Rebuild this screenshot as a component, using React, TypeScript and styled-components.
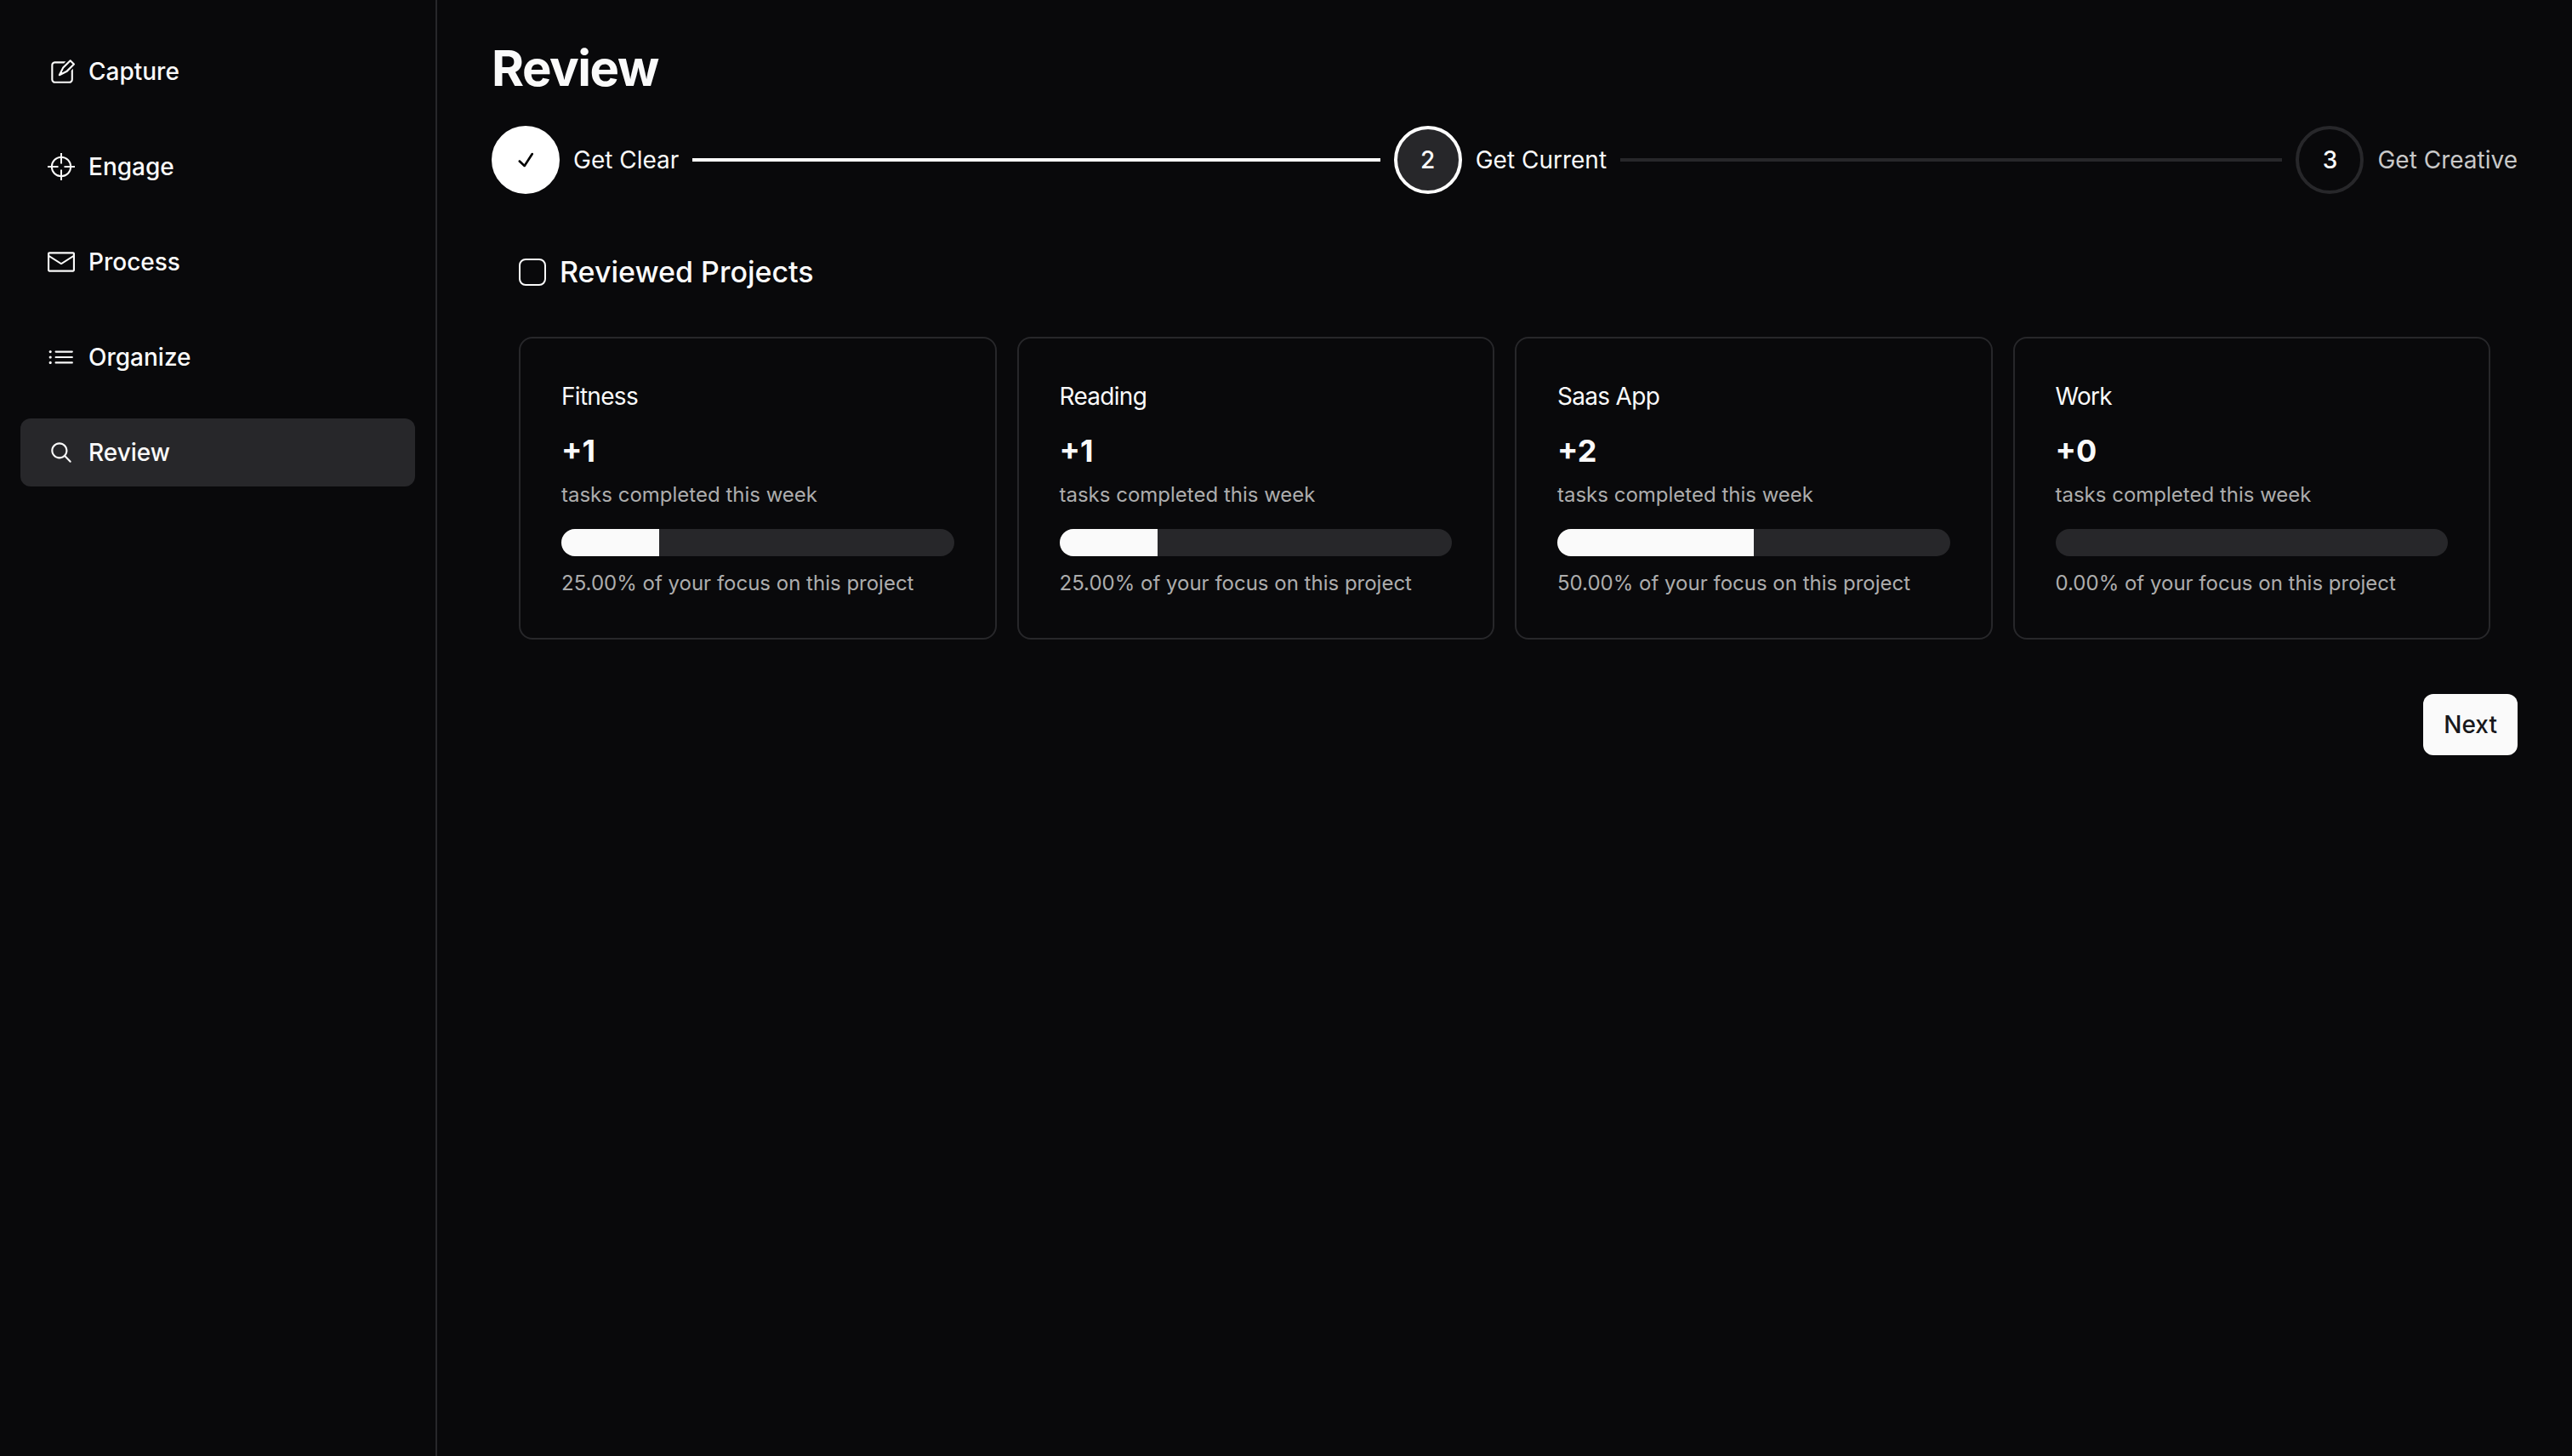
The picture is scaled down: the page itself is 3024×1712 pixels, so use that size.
import React, { useState } from "react";
import {
  RxCheck,
  RxEnvelopeClosed,
  RxListBullet,
  RxMagnifyingGlass,
  RxPencil2,
} from "react-icons/rx";
import styled, { createGlobalStyle, css } from "styled-components";

const color = {
  background: "#09090b",
  foreground: "#fafafa",
  surface: "#27272a",
  muted: "#adadad",
  dim: "#c8c8c8",
  ink: "#18181b",
};

const GlobalStyle = createGlobalStyle`
  *, *::before, *::after { box-sizing: border-box; }
  body {
    margin: 0;
    background: ${color.background};
    color: ${color.foreground};
    font-family: Inter, "Liberation Sans", sans-serif;
    font-size: 28px;
    line-height: 40px;
    -webkit-font-smoothing: antialiased;
  }
  h1, h2, h3, p, ul, ol { margin: 0; padding: 0; }
  ul, ol { list-style: none; }
  button { font: inherit; border: 0; cursor: pointer; }
`;

const Shell = styled.div`
  display: flex;
  min-height: 100vh;
`;

const Sidebar = styled.nav`
  flex: none;
  width: 514px;
  padding: 44px 24px;
  border-right: 2px solid ${color.surface};
`;

const NavList = styled.ul`
  display: flex;
  flex-direction: column;
  gap: 32px;
`;

const NavLink = styled.a<{ $active: boolean }>`
  display: flex;
  align-items: center;
  gap: 16px;
  height: 80px;
  padding: 0 32px;
  border-radius: 12px;
  background: ${(p) => (p.$active ? color.surface : "transparent")};
  color: inherit;
  font-weight: 500;
  text-decoration: none;

  svg {
    width: 32px;
    height: 32px;
  }
`;

const Main = styled.main`
  flex: 1;
  min-width: 0;
  padding: 44px 64px;
`;

const PageTitle = styled.h1`
  margin-bottom: 32px;
  font-size: 58px;
  font-weight: 700;
  line-height: 72px;
  letter-spacing: -0.025em;
`;

const Steps = styled.ol`
  display: flex;
`;

type StepState = "done" | "current" | "upcoming";

const Step = styled.li<{ $state: StepState }>`
  display: flex;
  align-items: center;
  gap: 16px;
  color: ${(p) => (p.$state === "upcoming" ? color.dim : color.foreground)};

  &:not(:last-child) {
    flex: 1;
  }

  &:not(:last-child)::after {
    content: "";
    flex: 1;
    height: 4px;
    margin-right: 16px;
    background: ${(p) => (p.$state === "done" ? "#fff" : color.surface)};
  }
`;

const stepLook = {
  done: css`
    background: #fff;
    border-color: #fff;
    color: #000;
  `,
  current: css`
    background: ${color.surface};
    border-color: #fff;
  `,
  upcoming: css`
    background: transparent;
    border-color: ${color.surface};
  `,
};

const StepCircle = styled.button<{ $state: StepState }>`
  display: flex;
  align-items: center;
  justify-content: center;
  width: 80px;
  height: 80px;
  padding: 0;
  border: 4px solid;
  border-radius: 50%;
  color: ${color.foreground};
  font-weight: 500;
  ${(p) => stepLook[p.$state]}

  svg {
    width: 32px;
    height: 32px;
  }
`;

const Section = styled.section`
  padding: 64px 32px;
`;

const CheckLabel = styled.label`
  display: flex;
  align-items: center;
  gap: 16px;
  margin-bottom: 48px;
  font-size: 34px;
  font-weight: 500;
  line-height: 56px;
`;

const Checkbox = styled.input`
  appearance: none;
  width: 32px;
  height: 32px;
  margin: 0;
  border: 2px solid ${color.foreground};
  border-radius: 8px;

  &:checked {
    background: ${color.foreground};
  }
`;

const CardGrid = styled.div`
  display: grid;
  grid-template-columns: repeat(4, minmax(0, 1fr));
  gap: 24px;
`;

const Card = styled.article`
  padding: 48px;
  border: 2px solid ${color.surface};
  border-radius: 16px;
`;

const CardTitle = styled.h3`
  margin-bottom: 16px;
  font-size: 28px;
  font-weight: 400;
  line-height: 40px;
  letter-spacing: -0.025em;
`;

const Count = styled.p`
  margin-bottom: 8px;
  font-size: 36px;
  font-weight: 700;
  line-height: 56px;
`;

const Caption = styled.p`
  color: ${color.muted};
  font-size: 24px;
  line-height: 32px;
`;

const Track = styled.div`
  height: 32px;
  margin: 24px 0 16px;
  border-radius: 16px;
  background: ${color.surface};
  overflow: hidden;
`;

const Fill = styled.div`
  height: 100%;
  background: ${color.foreground};
`;

const Actions = styled.div`
  display: flex;
  justify-content: flex-end;
`;

const PrimaryButton = styled.button`
  height: 72px;
  padding: 0 24px;
  border-radius: 12px;
  background: ${color.foreground};
  color: ${color.ink};
  font-weight: 500;
`;

function CrosshairIcon() {
  return (
    <svg viewBox="0 0 32 32" fill="none" stroke="currentColor" strokeWidth="2" aria-hidden>
      <circle cx="16" cy="16" r="11.2" />
      <path d="M16 0V12.5M16 19.5V32M0 16H12.5M19.5 16H32" />
    </svg>
  );
}

const navItems: { label: string; icon: React.ComponentType }[] = [
  { label: "Capture", icon: RxPencil2 },
  { label: "Engage", icon: CrosshairIcon },
  { label: "Process", icon: RxEnvelopeClosed },
  { label: "Organize", icon: RxListBullet },
  { label: "Review", icon: RxMagnifyingGlass },
];

const steps: { label: string; state: StepState }[] = [
  { label: "Get Clear", state: "done" },
  { label: "Get Current", state: "current" },
  { label: "Get Creative", state: "upcoming" },
];

const projects = [
  { name: "Fitness", completed: 1 },
  { name: "Reading", completed: 1 },
  { name: "Saas App", completed: 2 },
  { name: "Work", completed: 0 },
];

const total = projects.reduce((sum, p) => sum + p.completed, 0);

function ProjectCard({ name, completed }: { name: string; completed: number }) {
  const focus = (completed / total) * 100;
  return (
    <Card>
      <CardTitle>{name}</CardTitle>
      <Count>+{completed}</Count>
      <Caption>tasks completed this week</Caption>
      <Track role="progressbar" aria-label={name} aria-valuenow={focus}>
        <Fill style={{ width: `${focus}%` }} />
      </Track>
      <Caption>{focus.toFixed(2)}% of your focus on this project</Caption>
    </Card>
  );
}

export default function App() {
  const [reviewed, setReviewed] = useState(false);
  return (
    <>
      <GlobalStyle />
      <Shell>
        <Sidebar>
          <NavList>
            {navItems.map(({ label, icon: Icon }) => (
              <li key={label}>
                <NavLink href={`#${label.toLowerCase()}`} $active={label === "Review"}>
                  <Icon />
                  {label}
                </NavLink>
              </li>
            ))}
          </NavList>
        </Sidebar>
        <Main>
          <PageTitle>Review</PageTitle>
          <Steps>
            {steps.map(({ label, state }, i) => (
              <Step key={label} $state={state}>
                <StepCircle $state={state} aria-label={label}>
                  {state === "done" ? <RxCheck aria-hidden /> : i + 1}
                </StepCircle>
                <span>{label}</span>
              </Step>
            ))}
          </Steps>
          <Section>
            <CheckLabel htmlFor="reviewed">
              <Checkbox
                id="reviewed"
                type="checkbox"
                checked={reviewed}
                onChange={(e) => setReviewed(e.target.checked)}
              />
              Reviewed Projects
            </CheckLabel>
            <CardGrid>
              {projects.map((p) => (
                <ProjectCard key={p.name} {...p} />
              ))}
            </CardGrid>
          </Section>
          <Actions>
            <PrimaryButton>Next</PrimaryButton>
          </Actions>
        </Main>
      </Shell>
    </>
  );
}
